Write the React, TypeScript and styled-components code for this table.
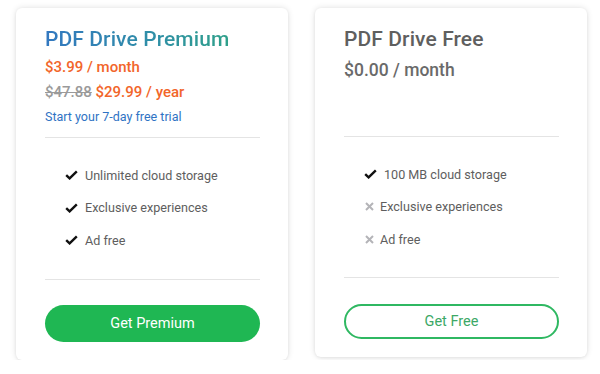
import React from 'react';
import styled, { createGlobalStyle, css } from 'styled-components';

const GlobalStyle = createGlobalStyle`
  html, body {
    margin: 0;
    padding: 0;
    background: #ffffff;
    font-family: Roboto, "Liberation Sans", Arial, sans-serif;
  }
`;

type Feature = { label: string; included: boolean };

const premiumFeatures: Feature[] = [
  { label: 'Unlimited cloud storage', included: true },
  { label: 'Exclusive experiences', included: true },
  { label: 'Ad free', included: true },
];

const freeFeatures: Feature[] = [
  { label: '100 MB cloud storage', included: true },
  { label: 'Exclusive experiences', included: false },
  { label: 'Ad free', included: false },
];

const CheckIcon = () => (
  <svg width="13" height="10" viewBox="0 0 13 10">
    <path d="M1.2 5.2 L4.6 8.4 L11.8 1.4" fill="none" stroke="#111" strokeWidth="2.4" />
  </svg>
);

const CrossIcon = () => (
  <svg width="9" height="9" viewBox="0 0 9 9">
    <path d="M1 1 L8 8 M8 1 L1 8" fill="none" stroke="#b4b4b8" strokeWidth="2" />
  </svg>
);

const FeatureList: React.FC<{ items: Feature[]; $top: number; $height: number }> = ({
  items,
  $top,
  $height,
}) => (
  <Features $top={$top} $height={$height}>
    {items.map((f) => (
      <FeatureRow key={f.label}>
        <IconSlot $included={f.included}>{f.included ? <CheckIcon /> : <CrossIcon />}</IconSlot>
        <span>{f.label}</span>
      </FeatureRow>
    ))}
  </Features>
);

const App: React.FC = () => {
  return (
    <>
      <GlobalStyle />
      <Page>
        <Card $height={352}>
          <Header $height={110}>
            <PremiumTitle>PDF Drive Premium</PremiumTitle>
            <Price>$3.99 / month</Price>
            <Price>
              <Strike>$47.88</Strike> $29.99 / year
            </Price>
            <Trial>Start your 7-day free trial</Trial>
          </Header>
          <Divider />
          <FeatureList items={premiumFeatures} $top={28} $height={141} />
          <Divider />
          <ButtonArea $top={25}>
            <PrimaryButton>Get Premium</PrimaryButton>
          </ButtonArea>
        </Card>
        <Card $height={349}>
          <Header $height={109}>
            <FreeTitle>PDF Drive Free</FreeTitle>
            <FreePrice>$0.00 / month</FreePrice>
          </Header>
          <Divider />
          <FeatureList items={freeFeatures} $top={28} $height={140} />
          <Divider />
          <ButtonArea $top={26}>
            <OutlineButton>Get Free</OutlineButton>
          </ButtonArea>
        </Card>
      </Page>
    </>
  );
};

const Page = styled.div`
  display: flex;
  align-items: flex-start;
  gap: 27px;
  padding: 8px 0 0 16px;
`;

const Card = styled.div<{ $height: number }>`
  width: 272px;
  height: ${(p) => p.$height}px;
  box-sizing: border-box;
  padding: 19px 28px 0 29px;
  background: #ffffff;
  border-radius: 6px;
  box-shadow: 0 0 6px rgba(0, 0, 0, 0.12), 0 1px 3px rgba(0, 0, 0, 0.06);
  display: flex;
  flex-direction: column;
`;

const Header = styled.div<{ $height: number }>`
  height: ${(p) => p.$height}px;
  display: flex;
  flex-direction: column;
`;

const titleBase = css`
  margin: 0 0 8px;
  font-size: 21px;
  line-height: 24px;
  font-weight: 500;
  letter-spacing: 0.1px;
`;

const PremiumTitle = styled.h2`
  ${titleBase}
  align-self: flex-start;
  background: linear-gradient(90deg, #3378c0 0%, #2f8fa6 60%, #2fa08a 100%);
  -webkit-background-clip: text;
  background-clip: text;
  color: transparent;
`;

const FreeTitle = styled.h2`
  ${titleBase}
  color: #5f5f5f;
`;

const Price = styled.div`
  font-size: 15px;
  line-height: 17px;
  font-weight: 500;
  color: #f2652a;
  margin-bottom: 8px;
`;

const Strike = styled.span`
  color: #9a9a9a;
  text-decoration: line-through;
`;

const FreePrice = styled.div`
  font-size: 17.5px;
  line-height: 22px;
  font-weight: 500;
  color: #6a6a6a;
`;

const Trial = styled.div`
  font-size: 12.5px;
  line-height: 15px;
  color: #2f73c4;
`;

const Divider = styled.hr`
  margin: 0;
  border: 0;
  border-top: 1px solid #e4e4e4;
`;

const Features = styled.ul<{ $top: number; $height: number }>`
  list-style: none;
  margin: 0;
  padding: ${(p) => p.$top}px 0 0 20px;
  height: ${(p) => p.$height}px;
  box-sizing: border-box;
  display: flex;
  flex-direction: column;
  gap: 14.5px;
`;

const FeatureRow = styled.li`
  display: flex;
  align-items: center;
  height: 18px;
  font-size: 12.6px;
  color: #5e5e5e;
`;

const IconSlot = styled.span<{ $included: boolean }>`
  display: inline-flex;
  align-items: center;
  justify-content: flex-start;
  width: ${(p) => (p.$included ? 20 : 16)}px;
  padding-left: ${(p) => (p.$included ? 0 : 1)}px;
  box-sizing: border-box;
`;

const ButtonArea = styled.div<{ $top: number }>`
  padding-top: ${(p) => p.$top}px;
`;

const buttonBase = css`
  display: block;
  width: 100%;
  box-sizing: border-box;
  border-radius: 999px;
  font-family: Roboto, "Liberation Sans", Arial, sans-serif;
  font-size: 14.5px;
  cursor: pointer;
`;

const PrimaryButton = styled.button`
  ${buttonBase}
  height: 37px;
  border: 0;
  background: #1fb753;
  color: #ffffff;
`;

const OutlineButton = styled.button`
  ${buttonBase}
  height: 35px;
  border: 2px solid #2fb862;
  background: #ffffff;
  color: #3ca866;
`;

export default App;
